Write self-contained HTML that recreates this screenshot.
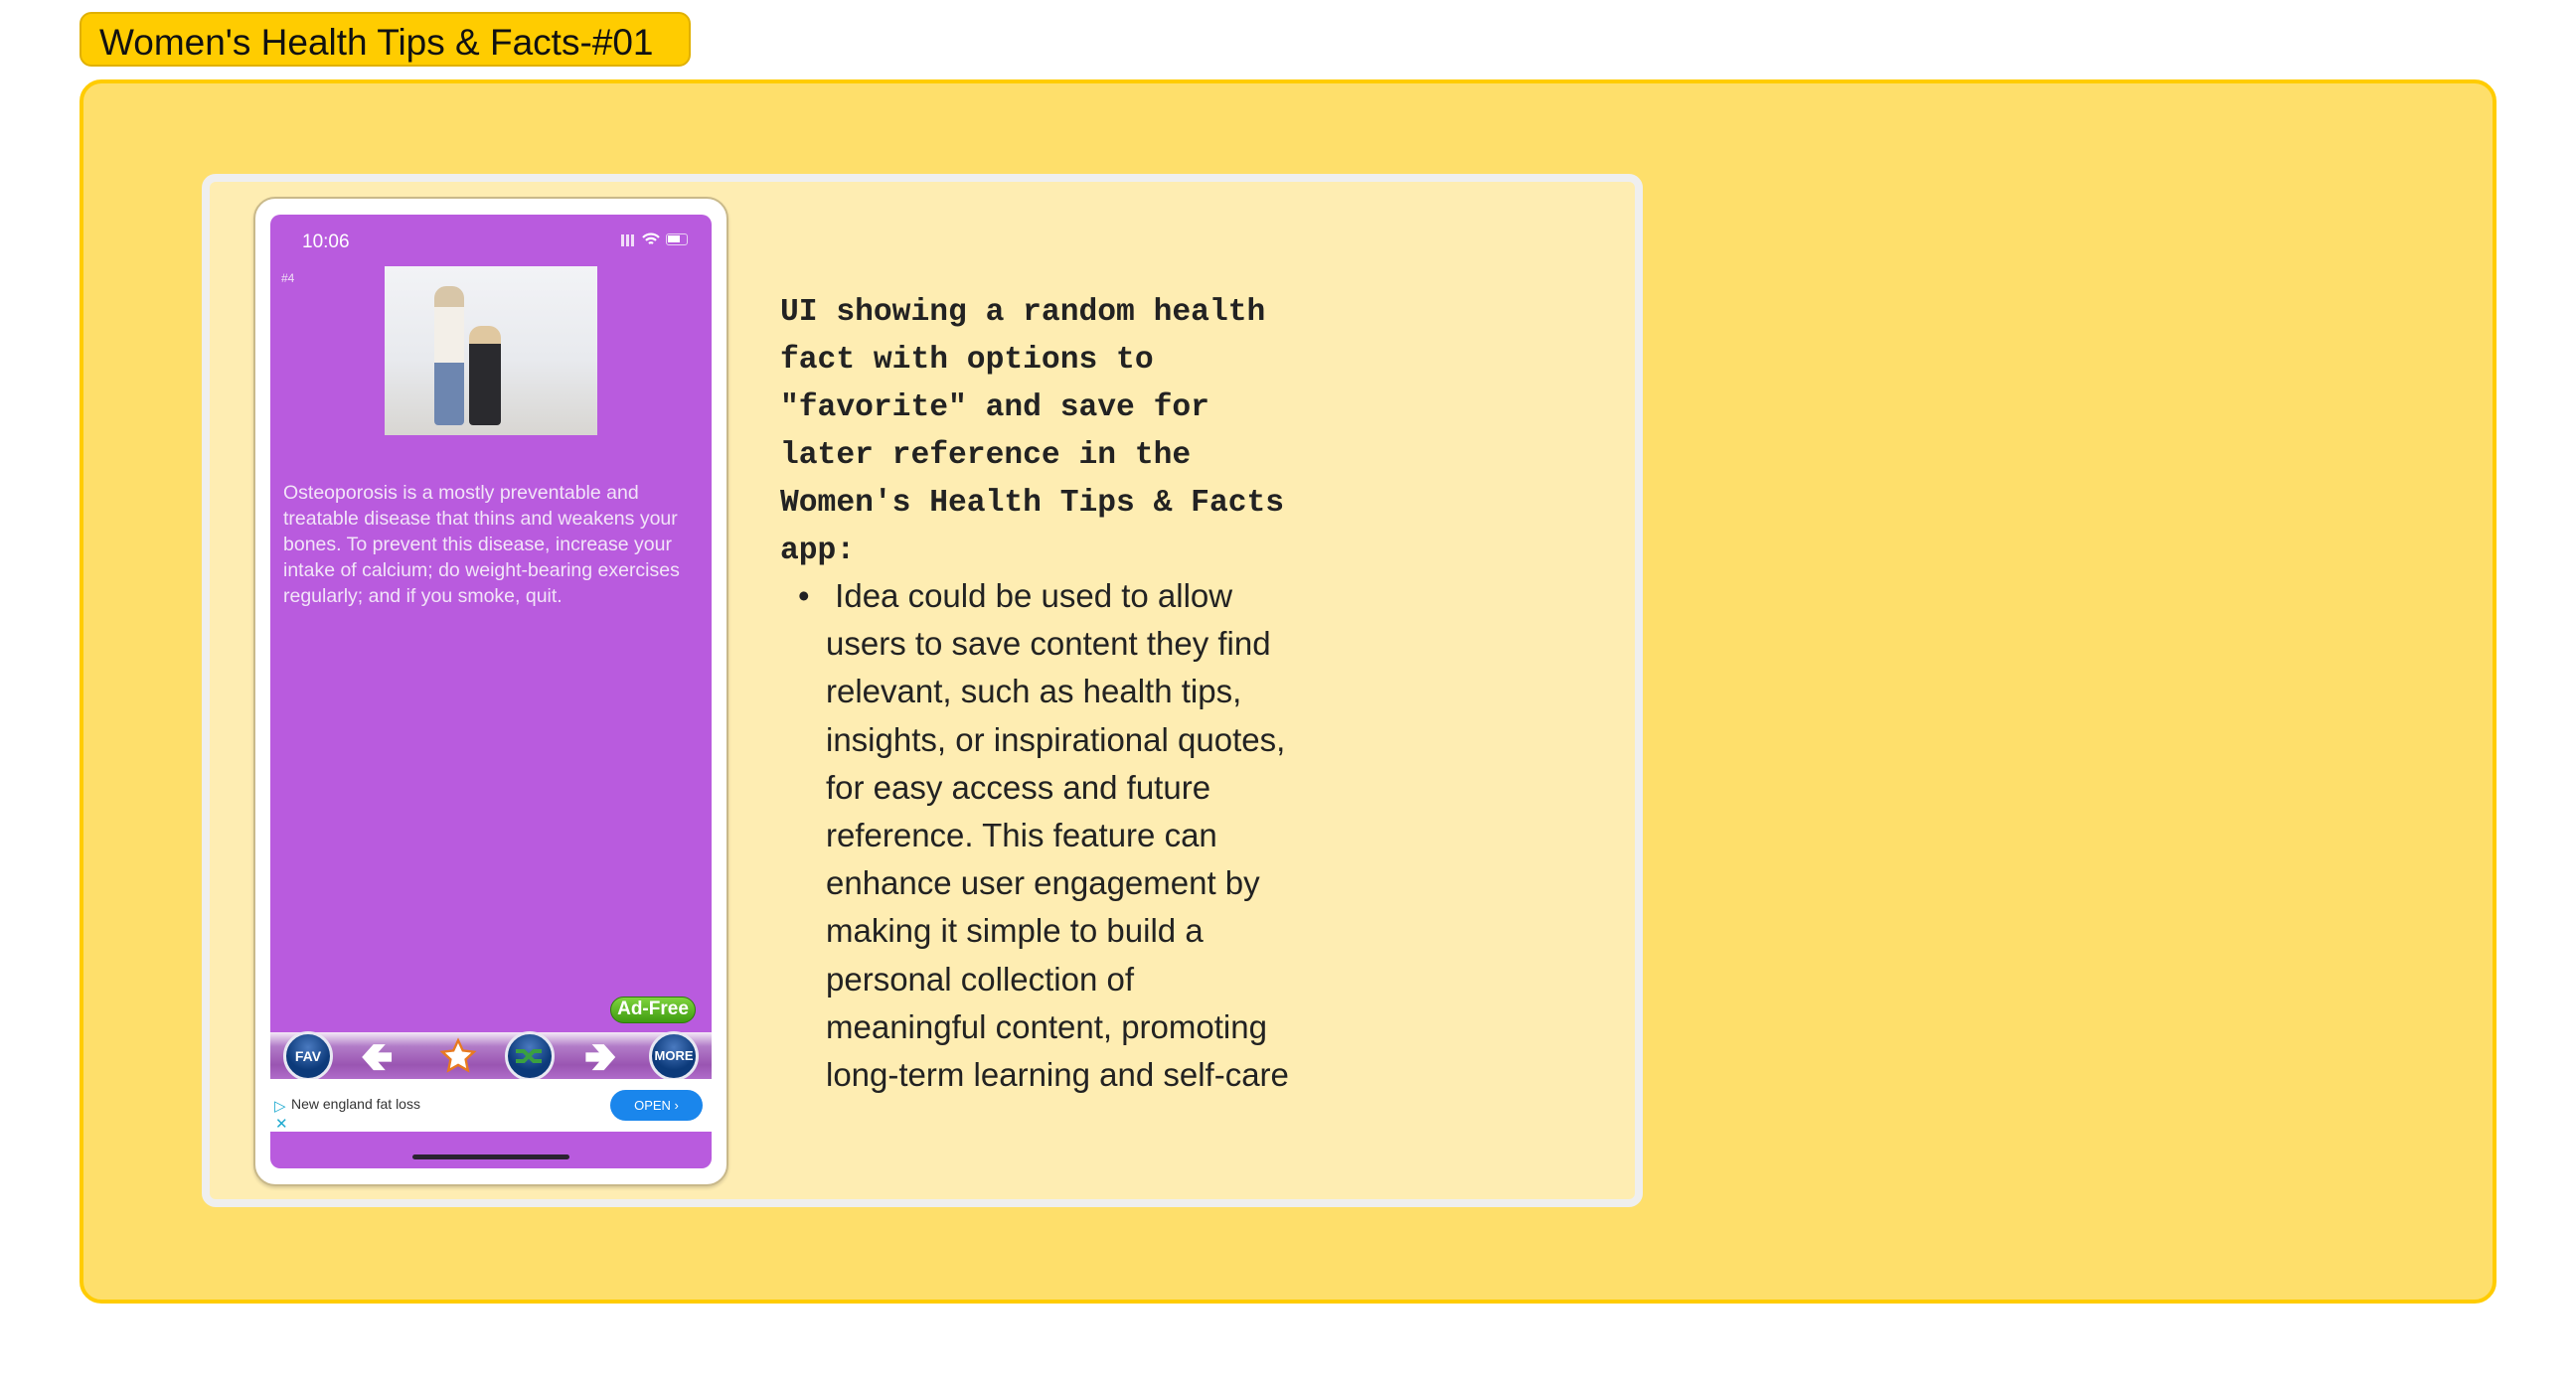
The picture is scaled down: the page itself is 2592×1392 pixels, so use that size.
<!DOCTYPE html>
<html><head><meta charset="utf-8"><style>
*{margin:0;padding:0;box-sizing:border-box}
body{width:2592px;height:1392px;background:#fff;position:relative;overflow:hidden;font-family:"Liberation Sans",sans-serif}
.abs{position:absolute}
.title{left:80px;top:12px;width:615px;height:55px;background:#FFCC00;border:2px solid #E0B000;border-radius:12px;font-size:37px;line-height:57px;padding-left:18px;color:#111}
.main{left:80px;top:80px;width:2432px;height:1232px;background:#FEDF6B;border:4px solid #FFCC00;border-radius:22px}
.card{left:203px;top:175px;width:1450px;height:1040px;background:#FEEDB2;border:8px solid #EFEFEF;border-radius:14px}
.phone{left:255px;top:198px;width:478px;height:996px;background:#fff;border:2px solid #C9B98A;border-radius:22px;box-shadow:0 2px 3px rgba(0,0,0,.15)}
.screen{left:272px;top:216px;width:444px;height:960px;background:#B95BDE;border-radius:10px;overflow:hidden}
.mono{font-family:"Liberation Mono",monospace;font-weight:bold;font-size:31.3px;line-height:48px;color:#222}
.txt{left:785px;top:291px;width:900px}
.sans{font-family:"Liberation Sans",sans-serif;font-weight:normal;font-size:33px;line-height:48.2px;color:#222;margin-top:-3px}
.circ{position:absolute;width:50px;height:50px;border-radius:50%;background:radial-gradient(circle at 50% 30%,#4a7ac0,#0c3a7a 60%);border:3px solid #e8e8f2;color:#fff;font-weight:bold;font-size:14px;text-align:center;line-height:44px;top:1038px}
</style></head><body>
<div class="abs title">Women's Health Tips &amp; Facts-#01</div>
<div class="abs main"></div>
<div class="abs card"></div>
<div class="abs phone"></div>
<div class="abs screen"></div>
<div class="abs" style="left:304px;top:233px;color:#fff;font-size:19px">10:06</div>
<div class="abs" style="left:625px;top:236px;width:14px;height:12px;background:repeating-linear-gradient(90deg,#fff 0 3px,transparent 3px 5px);opacity:.8"></div>
<svg class="abs" style="left:645px;top:233px" width="20" height="16" viewBox="0 0 20 16"><path d="M2 6a11 11 0 0 1 16 0M5 9a7 7 0 0 1 10 0M8 12a3 3 0 0 1 4 0" stroke="#fff" stroke-width="2.2" fill="none"/></svg>
<div class="abs" style="left:670px;top:235px;width:22px;height:12px;border:1.5px solid #e8d0f2;border-radius:3px"><div style="width:12px;height:7px;background:#fff;margin:1px"></div></div>
<div class="abs" style="left:283px;top:273px;color:#f0e0f6;font-size:12px">#4</div>
<div class="abs" style="left:387px;top:268px;width:214px;height:170px;background:linear-gradient(180deg,#f2f3f6 0%,#e8eaee 55%,#d8d6d2 100%)">
<div class="abs" style="left:50px;top:20px;width:30px;height:140px;background:linear-gradient(#d8c6a8 0 15%,#f3efe8 15% 55%,#6d86b0 55%);border-radius:12px 12px 4px 4px"></div>
<div class="abs" style="left:85px;top:60px;width:32px;height:100px;background:linear-gradient(#e0c8a0 0 18%,#2a2a2e 18%);border-radius:12px 12px 4px 4px"></div>
</div>
<div class="abs" style="left:285px;top:483px;width:430px;color:#f2e4f8;font-size:19.5px;line-height:26px">Osteoporosis is a mostly preventable and treatable disease that thins and weakens your bones. To prevent this disease, increase your intake of calcium; do weight-bearing exercises regularly; and if you smoke, quit.</div>
<div class="abs" style="left:614px;top:1003px;width:86px;height:27px;border-radius:14px;background:linear-gradient(#7fd43e,#3f9b10);border:1.5px solid #2f7a0c;color:#fff;font-weight:bold;font-size:19px;text-align:center;line-height:24px">Ad-Free</div>
<div class="abs" style="left:272px;top:1039px;width:444px;height:47px;background:linear-gradient(#f4eaf6 0%,#b27cc8 30%,#9a55b2 70%,#b06cca 100%)"></div>
<div class="circ" style="left:285px">FAV</div>
<div class="abs" style="left:363px;top:1044px;color:#fff;font-size:40px;line-height:40px;font-weight:bold">&#129152;</div>
<svg class="abs" style="left:442px;top:1044px" width="38" height="38" viewBox="0 0 24 24"><path d="M12 2l3 6.5 7 .8-5.2 4.8 1.4 7L12 17.6 5.8 21.1l1.4-7L2 9.3l7-.8z" fill="#fff" stroke="#E87A20" stroke-width="1.5"/></svg>
<div class="circ" style="left:508px"><svg width="36" height="30" viewBox="0 0 36 30" style="margin-top:7px"><path d="M4 10h8l10 10h8M4 20h8l10-10h8" stroke="#3aa040" stroke-width="4" fill="none"/></svg></div>
<div class="abs" style="left:588px;top:1044px;color:#fff;font-size:40px;line-height:40px;font-weight:bold">&#129154;</div>
<div class="circ" style="left:653px;font-size:13px">MORE</div>
<div class="abs" style="left:272px;top:1086px;width:444px;height:53px;background:#fff"></div>
<div class="abs" style="left:276px;top:1104px;color:#1eaad0;font-size:15px">&#9655;</div>
<div class="abs" style="left:277px;top:1122px;color:#1eaad0;font-size:15px">&#10005;</div>
<div class="abs" style="left:293px;top:1103px;color:#333;font-size:14px">New england fat loss</div>
<div class="abs" style="left:614px;top:1097px;width:93px;height:31px;border-radius:16px;background:#1a86ec;color:#fff;font-size:13px;text-align:center;line-height:31px">OPEN &#8250;</div>
<div class="abs" style="left:415px;top:1162px;width:158px;height:5px;border-radius:3px;background:#2b2231"></div>
<div class="abs txt mono">UI showing a random health<br>fact with options to<br>"favorite" and save for<br>later reference in the<br>Women's Health Tips &amp; Facts<br>app:
<div class="sans" style="position:relative;padding-left:46px"><span style="position:absolute;left:18px;top:0">&#8226;</span>&nbsp;Idea could be used to allow<br>users to save content they find<br>relevant, such as health tips,<br>insights, or inspirational quotes,<br>for easy access and future<br>reference. This feature can<br>enhance user engagement by<br>making it simple to build a<br>personal collection of<br>meaningful content, promoting<br>long-term learning and self-care</div></div>
</body></html>
